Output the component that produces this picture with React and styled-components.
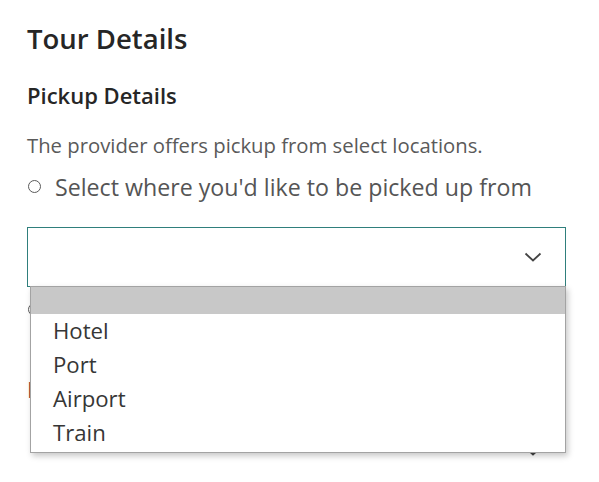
import React, { useState } from 'react'
import styled, { createGlobalStyle } from 'styled-components'

const GlobalStyle = createGlobalStyle`
  html, body {
    margin: 0;
    padding: 0;
    background: #fff;
  }
  body {
    font-family: "Open Sans", "DejaVu Sans", sans-serif;
    color: #333;
  }
`

const Page = styled.div`
  width: 599px;
  height: 482px;
  overflow: hidden;
  padding: 22px 33px 0 27px;
  box-sizing: border-box;
`

const Title = styled.h2`
  margin: 0;
  font-size: 27.5px;
  line-height: 34px;
  font-weight: 600;
  color: #262626;
`

const Subtitle = styled.h3`
  margin: 24px 0 0;
  font-size: 22px;
  line-height: 30px;
  font-weight: 600;
  color: #262626;
`

const Note = styled.p`
  margin: 21px 0 0;
  font-size: 20.3px;
  line-height: 28px;
  color: #5a5a5a;
`

const RadioRow = styled.label`
  display: flex;
  align-items: center;
  gap: 14px;
  margin-top: ${p => p.$top || 8}px;
  padding-left: 1px;
  font-size: 23.2px;
  line-height: 32px;
  color: #555;
  white-space: nowrap;
`

const RadioDot = styled.span`
  width: 13px;
  height: 13px;
  box-sizing: border-box;
  border: 1.4px solid #5a5a5a;
  border-radius: 50%;
  flex: none;
  margin-top: -2px;
`

const Warning = styled.div`
  margin-top: 47px;
  font-size: 22px;
  line-height: 32px;
  color: #9c4237;
  white-space: nowrap;
`

const SelectWrap = styled.div`
  position: relative;
  margin-top: ${p => p.$top || 0}px;
`

const SelectBox = styled.div`
  height: 60px;
  box-sizing: border-box;
  border: 1px solid ${p => p.$plain ? 'transparent' : '#2f7f7c'};
  display: flex;
  align-items: center;
  justify-content: flex-end;
  padding-right: 23px;
  background: #fff;
`

const Chevron = styled.svg`
  width: 18px;
  height: 10px;
  stroke: #444;
  stroke-width: 1.8;
  fill: none;
`

const Menu = styled.ul`
  position: absolute;
  top: 59px;
  left: 3px;
  right: 0;
  margin: 0;
  padding: 0 0 2px;
  list-style: none;
  background: #fff;
  border: 1px solid #a3a3a3;
  box-shadow: 2px 3px 6px rgba(0, 0, 0, 0.22);
  z-index: 5;
`

const Option = styled.li`
  height: ${p => p.$blank ? 27 : 34}px;
  line-height: 34px;
  padding-left: 22px;
  font-size: 22.2px;
  color: #363636;
  background: ${p => p.$active ? '#c8c8c8' : '#fff'};
`

function Arrow() {
  return (
    <Chevron viewBox="0 0 18 10">
      <path d="M1.5 1.5 L9 8.5 L16.5 1.5" />
    </Chevron>
  )
}

const options = ['', 'Hotel', 'Port', 'Airport', 'Train']

export default function App() {
  const [open] = useState(true)
  return (
    <>
      <GlobalStyle />
      <Page>
        <Title>Tour Details</Title>
        <Subtitle>Pickup Details</Subtitle>
        <Note>The provider offers pickup from select locations.</Note>
        <RadioRow $top={12}>
          <RadioDot />
          Select where you'd like to be picked up from
        </RadioRow>
        <SelectWrap $top={24}>
          <SelectBox>
            <Arrow />
          </SelectBox>
          {open && (
            <Menu>
              {options.map((o, i) => (
                <Option key={o || 'blank'} $blank={!o} $active={i === 0}>{o}</Option>
              ))}
            </Menu>
          )}
        </SelectWrap>
        <RadioRow $top={7}>
          <RadioDot />
          I'll make my own way
        </RadioRow>
        <Warning>Required</Warning>
        <SelectWrap $top={16}>
          <SelectBox $plain>
            <Arrow />
          </SelectBox>
        </SelectWrap>
      </Page>
    </>
  )
}
